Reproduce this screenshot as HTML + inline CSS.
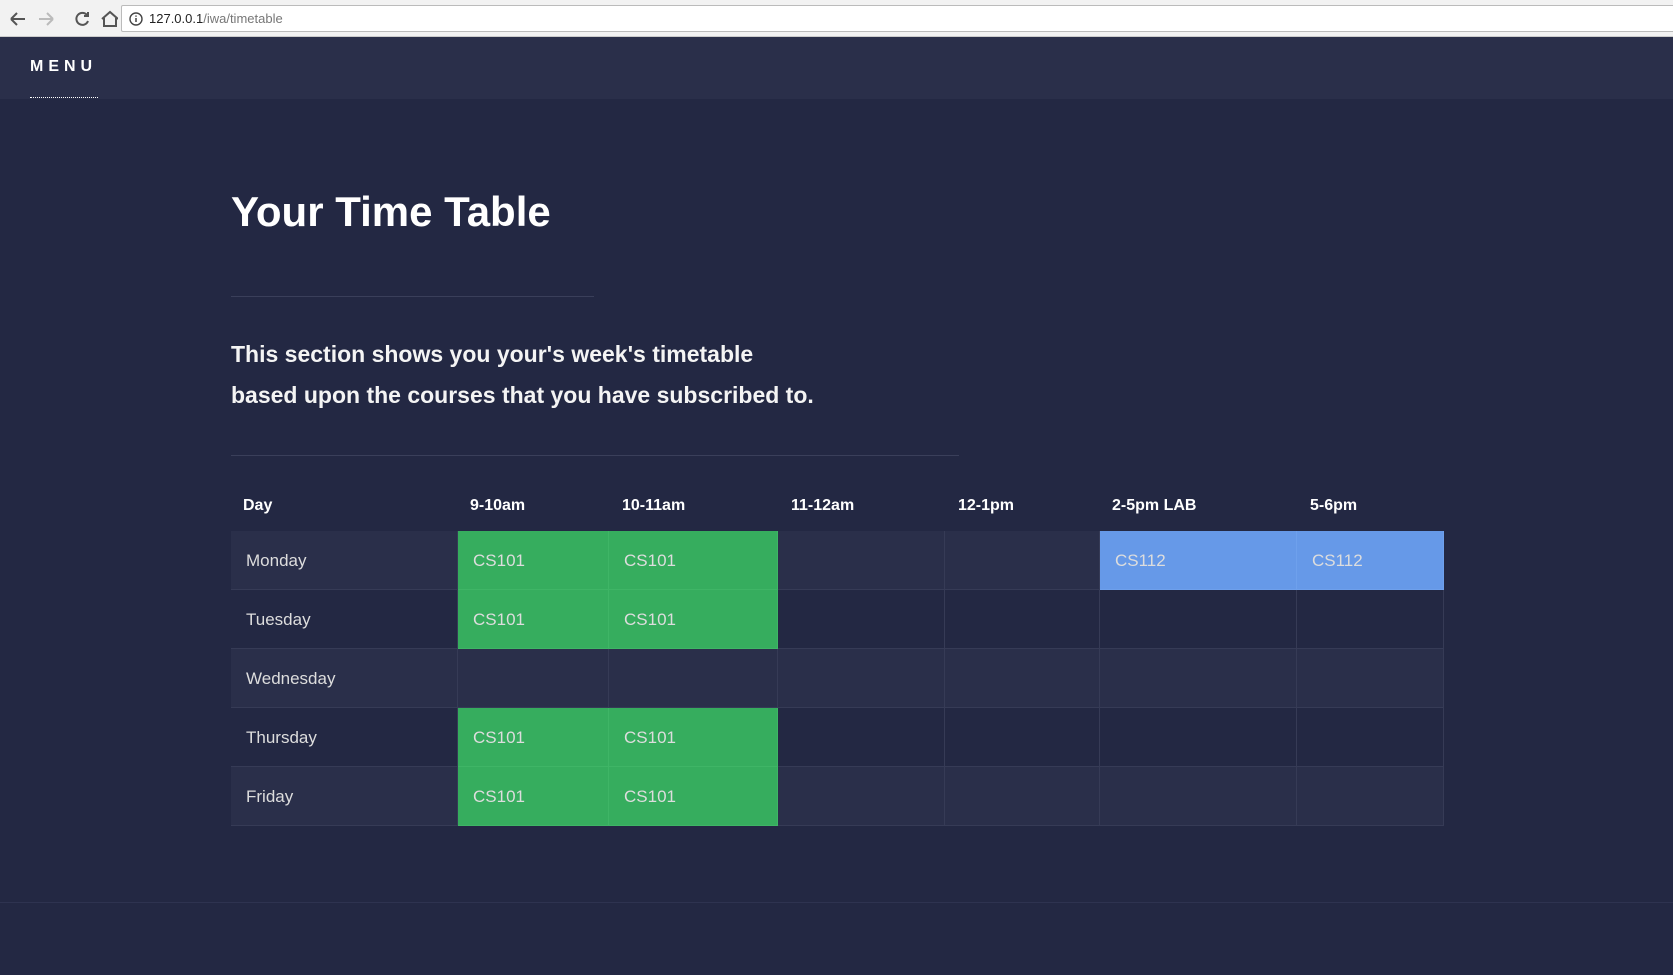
<!DOCTYPE html>
<html><head><meta charset="utf-8"><style>
*{margin:0;padding:0;box-sizing:border-box}
body{width:1673px;height:975px;overflow:hidden;background:#232843;font-family:"Liberation Sans",sans-serif;color:#fff;position:relative}
.chrome{position:absolute;left:0;top:0;width:1673px;height:37px;background:#f2f2f2;border-bottom:1px solid #ccc}
.url{position:absolute;left:121px;top:5px;right:-5px;height:27px;background:#fff;border:1px solid #bbb;border-radius:2px;font-size:13px;color:#222;padding:5px 0 0 27px}
.url span{color:#777}
.nav{position:absolute;left:0;top:37px;width:1673px;height:62px;background:#2a2f4a}
.menu{position:absolute;left:30px;top:58px;font-size:16px;font-weight:bold;letter-spacing:5px;color:#fff}
.ul{position:absolute;left:30px;top:97px;width:68px;border-top:1px dotted #fff}
h1{position:absolute;left:231px;top:188px;font-size:42px;font-weight:bold;color:#fff}
.hr{position:absolute;height:1px;background:#3a3f5a}
p.t{position:absolute;left:231px;top:334px;font-size:23px;font-weight:bold;line-height:41px;color:#f4f4f4}
.c{position:absolute;font-size:17px;color:#ddd;line-height:59px;padding-left:15px;border-right:1px solid #363b56;border-bottom:1px solid #363b56;height:59px}
.h{position:absolute;top:497px;font-size:16px;font-weight:bold;color:#fff}
</style></head><body>
<div class="chrome">
<svg style="position:absolute;left:8px;top:8px" width="110" height="22" viewBox="0 0 110 22" fill="none" stroke-width="2">
<path d="M3 11h14M3 11l6-6M3 11l6 6" stroke="#555"/>
<path d="M31 11h14M45 11l-6-6M45 11l-6 6" stroke="#bbb"/>
<path d="M79 7a6 6 0 1 0 1 6M80 4v4h-4" stroke="#555"/>
<path d="M94 11l8-7 8 7M96 10v8h12v-8" stroke="#555"/>
</svg>
<div class="url"><svg style="position:absolute;left:7px;top:6px" width="14" height="14"><circle cx="7" cy="7" r="6" fill="none" stroke="#444" stroke-width="1.4"/><path d="M7 6v4M7 3.5v1.2" stroke="#444" stroke-width="1.5"/></svg>127.0.0.1<span>/iwa/timetable</span></div>
</div>
<div class="nav"></div>
<div class="menu">MENU</div>
<div class="ul"></div>
<h1>Your Time Table</h1>
<div class="hr" style="left:231px;top:296px;width:363px"></div>
<p class="t">This section shows you your's week's timetable<br>based upon the courses that you have subscribed to.</p>
<div class="hr" style="left:231px;top:455px;width:728px"></div>
<div class="h" style="left:243px">Day</div>
<div class="h" style="left:470px">9-10am</div>
<div class="h" style="left:622px">10-11am</div>
<div class="h" style="left:791px">11-12am</div>
<div class="h" style="left:958px">12-1pm</div>
<div class="h" style="left:1112px">2-5pm LAB</div>
<div class="h" style="left:1310px">5-6pm</div>
<div style="position:absolute;left:231px;top:531px;width:1213px;height:295px;border-left:1px solid #363b56;border-top:1px solid #363b56"></div>
<div id="t"></div>
<script>
var cols=[231,458,609,778,945,1100,1297,1444];
var days=["Monday","Tuesday","Wednesday","Thursday","Friday"];
var data=[["CS101","CS101","","","CS112","CS112"],["CS101","CS101","","","",""],["","","","","",""],["CS101","CS101","","","",""],["CS101","CS101","","","",""]];
var h="";
for(var r=0;r<5;r++){var y=531+r*59;var bg=r%2==0?"#2a2f4a":"#232843";
for(var c=0;c<7;c++){var x=cols[c],w=cols[c+1]-x;var txt=c==0?days[r]:data[r][c-1];var b=bg;
if(c>0&&txt){b=txt=="CS101"?"#36ad5e":"#6699e8";}
var bc=(c>0&&txt)?(txt=="CS101"?"#3fb566":"#6ea0ec"):"#363b56";
h+='<div class="c" style="left:'+x+'px;top:'+y+'px;width:'+w+'px;background:'+b+';border-color:'+bc+'">'+txt+'</div>';}}
document.getElementById("t").innerHTML=h;
</script>
<div class="hr" style="left:0;top:902px;width:1673px;background:#2e3350"></div>
</body></html>
